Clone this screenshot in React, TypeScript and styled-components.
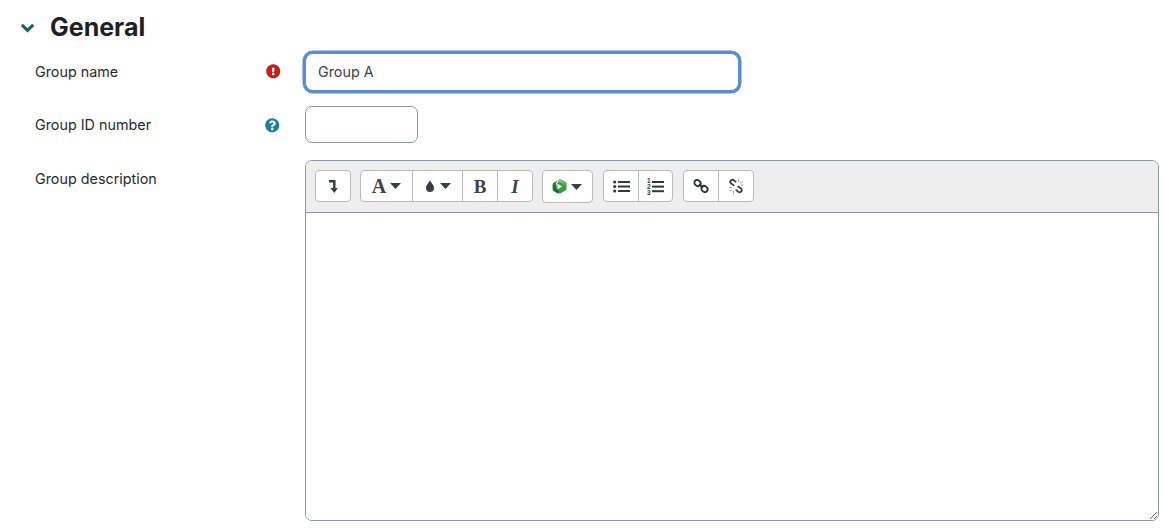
import React from "react";
import styled, { createGlobalStyle } from "styled-components";
import { FaExclamationCircle, FaQuestionCircle } from "react-icons/fa";

const Global = createGlobalStyle`
  html, body { margin: 0; padding: 0; background: #fff; overflow: hidden; }
  body { font-family: Inter, "Liberation Sans", sans-serif; color: #262a2e; font-size: 14.35px; }
  * { box-sizing: border-box; }
`;
const Page = styled.div`
  width: 1164px;
  height: 528px;
  padding: 12px 5px 0 20px;
  overflow: hidden;
`;
const Heading = styled.div`
  display: flex;
  align-items: center;
  height: 30px;
  margin-bottom: 9px;
`;
const ChevronIcon = styled.svg`
  flex: none;
  margin: 2px 15px 0 0;
`;
const Title = styled.h2`
  margin: 0;
  font-size: 25px;
  line-height: 30px;
  font-weight: 700;
  color: #1d2125;
`;
const Row = styled.div<{ $h: number }>`
  display: grid;
  grid-template-columns: 230px 40px 1fr;
  height: ${(p) => p.$h}px;
  padding-left: 15px;
`;
const Label = styled.label<{ $t: number }>`
  line-height: 22px;
  padding-top: ${(p) => p.$t}px;
`;
const Help = styled.div<{ $c: string; $t: number; $l: number }>`
  color: ${(p) => p.$c};
  padding-top: ${(p) => p.$t}px;
  padding-left: ${(p) => p.$l}px;
  line-height: 0;
  svg { width: 14.5px; height: 14.5px; }
`;
const NameInput = styled.input`
  display: block;
  width: 434px;
  height: 38px;
  margin-top: 2px;
  border: 1px solid #5b8bd3;
  border-radius: 8px;
  box-shadow: 0 0 0 2.5px #5b8bd3;
  outline: none;
  padding: 0 12px 2px;
  font: inherit;
  color: #3d4248;
`;
const IdInput = styled.input`
  display: block;
  width: 113px;
  height: 37px;
  border: 1px solid #8f959e;
  border-radius: 7px;
  outline: none;
  background: #fff;
`;
const Editor = styled.div`
  width: 854px;
  height: 361px;
  border: 1px solid #8f959e;
  border-radius: 7px;
  overflow: hidden;
  display: flex;
  flex-direction: column;
`;
const Toolbar = styled.div`
  height: 52px;
  flex: none;
  background: #eeeeee;
  border-bottom: 1px solid #8f959e;
  padding: 9px 0 0 9px;
  display: flex;
  align-items: flex-start;
  gap: 9px;
`;
const Group = styled.div<{ $ml?: number; $h?: number }>`
  display: flex;
  height: ${(p) => p.$h ?? 32}px;
  margin-left: ${(p) => p.$ml ?? 0}px;
  background: #fff;
  border: 1px solid #bbbbbb;
  border-radius: 4px;
  overflow: hidden;
`;
const Btn = styled.div<{ $w: number; $gap?: number; $pr?: number }>`
  width: ${(p) => p.$w}px;
  display: flex;
  align-items: center;
  justify-content: center;
  color: #3a3f44;
  gap: ${(p) => p.$gap ?? 3}px;
  padding-right: ${(p) => p.$pr ?? 0}px;
  & + & { border-left: 1px solid #bbbbbb; }
`;
const Glyph = styled.span<{ $i?: boolean; $s: number }>`
  font-family: "Liberation Serif", serif;
  font-weight: 700;
  font-style: ${(p) => (p.$i ? "italic" : "normal")};
  font-size: ${(p) => p.$s}px;
  line-height: 1;
  color: #3e4347;
`;
const Digit = styled.text`
  font-family: "Liberation Sans", sans-serif;
  font-size: 6.5px;
  font-weight: 700;
  fill: #33383c;
`;

const Chevron = () => (
  <ChevronIcon width="15" height="10" viewBox="0 0 15 10" fill="none">
    <path d="M1.800 1.800L7.500 7.300l5.700-5.500" stroke="#1a5d63" strokeWidth="3" />
  </ChevronIcon>
);
const Caret = () => (
  <svg width="11" height="6" viewBox="0 0 11 6">
    <path d="M0 0h11L5.500 6z" fill="#3a3f44" />
  </svg>
);
const Tint = () => (
  <svg width="10" height="12" viewBox="0 0 10 12">
    <path d="M5 0C5.600 2.500 9 4.800 9 7.700a4 4.200 0 0 1-8 0C1 4.800 4.400 2.500 5 0z" fill="#3a3f44" />
  </svg>
);
const Return = () => (
  <svg width="9" height="13" viewBox="0 0 9 13" fill="none">
    <path d="M0 1.300h5.300v8" stroke="#3a3f44" strokeWidth="2.500" />
    <path d="M1.500 8h7.400L5.300 13z" fill="#3a3f44" />
  </svg>
);
const Cube = () => (
  <svg width="15" height="15" viewBox="0 0 15 15">
    <defs>
      <linearGradient id="cubeTop" x1="0" y1="0" x2="1" y2="1">
        <stop offset="0" stopColor="#a8cf9a" />
        <stop offset="1" stopColor="#3f9a45" />
      </linearGradient>
      <linearGradient id="cubeLeft" x1="0" y1="0" x2="0" y2="1">
        <stop offset="0" stopColor="#2f8a3b" />
        <stop offset="1" stopColor="#155f27" />
      </linearGradient>
    </defs>
    <path d="M7 .6c.6-.3 1.200-.3 1.800 0l4.600 2.500c.7.4 1 1 1 1.700v5c0 .8-.4 1.400-1 1.800l-4.700 2.700c-.6.3-1.200.3-1.800 0L2 11.800" fill="#3c9a45" />
    <path d="M5 2l2-1.400c.6-.3 1.200-.3 1.800 0l4.600 2.500c.7.4 1 1 1 1.700v3l-4-2.500V4.500z" fill="url(#cubeTop)" />
    <path d="M5.500 1.600L1.600 3.800C.9 4.200.6 4.800.6 5.500v4.800c0 .7.3 1.300 1 1.700l4.700 2.700.6-3.200L4 10V4z" fill="url(#cubeLeft)" />
    <path d="M5.500 4.700l5 2.800-5 2.800z" fill="#fff" />
  </svg>
);
const Bullets = () => (
  <svg width="17" height="13" viewBox="0 0 17 13" fill="#33383c">
    <circle cx="1.700" cy="2" r="1.600" />
    <circle cx="1.700" cy="6.500" r="1.600" />
    <circle cx="1.700" cy="11" r="1.600" />
    <rect x="5" y="1" width="12" height="2" />
    <rect x="5" y="5.500" width="12" height="2" />
    <rect x="5" y="10" width="12" height="2" />
  </svg>
);
const Numbers = () => (
  <svg width="17" height="17" viewBox="0 0 17 17" fill="#33383c">
    <Digit x="0" y="5.200">1</Digit>
    <Digit x="0" y="11">2</Digit>
    <Digit x="0" y="16.800">3</Digit>
    <rect x="5" y="3" width="12" height="2" />
    <rect x="5" y="7.600" width="12" height="2" />
    <rect x="5" y="12.200" width="12" height="2" />
  </svg>
);
const Link = () => (
  <svg width="16" height="14" viewBox="0 0 16 14" fill="none" stroke="#2c3034" strokeWidth="1.800">
    <ellipse cx="4.500" cy="4" rx="3.300" ry="2.800" transform="rotate(40 4.500 4)" />
    <ellipse cx="11.500" cy="10" rx="3.300" ry="2.800" transform="rotate(40 11.500 10)" />
    <path d="M6 5.300l4 3.400" />
  </svg>
);
const Unlink = () => (
  <svg width="16" height="16" viewBox="0 0 16 16" fill="none">
    <path d="M8.200 4.200L6 2.300C4.200.9 1.200 2.600 2.500 4.800c.6 1 2.300 1.900 3.800 3" stroke="#33383c" strokeWidth="1.700" />
    <path d="M9.700 8.200c1.500 1 3.200 1.900 3.800 3 1.300 2.200-1.700 3.900-3.500 2.500l-2.300-2" stroke="#33383c" strokeWidth="1.700" />
    <path d="M10.500 1v3M12 5l3-1.500M12.500 7h3M1 9.500h3M1.500 13L4 11.500M5.500 12.500v3" stroke="#a3a3a3" strokeWidth="1" />
  </svg>
);
const Area = styled.textarea`
  flex: 1;
  display: block;
  width: 100%;
  border: none;
  outline: none;
  resize: vertical;
  background: #fff;
`;

export default function App() {
  return (
    <Page>
      <Global />
      <Heading>
        <Chevron />
        <Title>General</Title>
      </Heading>
      <Row $h={55}>
        <Label $t={10}>Group name</Label>
        <Help $c="#c31f1f" $t={13} $l={1}><FaExclamationCircle /></Help>
        <NameInput defaultValue="Group A" />
      </Row>
      <Row $h={54}>
        <Label $t={8}>Group ID number</Label>
        <Help $c="#1f7e9a" $t={12} $l={0}><FaQuestionCircle /></Help>
        <IdInput />
      </Row>
      <Row $h={370}>
        <Label $t={8}>Group description</Label>
        <div />
        <Editor>
          <Toolbar>
            <Group><Btn $w={34}><Return /></Btn></Group>
            <Group>
              <Btn $w={51} $gap={4}><Glyph $s={20}>A</Glyph><Caret /></Btn>
              <Btn $w={50} $gap={5}><Tint /><Caret /></Btn>
              <Btn $w={35}><Glyph $s={19}>B</Glyph></Btn>
              <Btn $w={35}><Glyph $s={19} $i>I</Glyph></Btn>
            </Group>
            <Group $h={33}><Btn $w={49} $gap={4} $pr={2}><Cube /><Caret /></Btn></Group>
            <Group $ml={1}>
              <Btn $w={34}><Bullets /></Btn>
              <Btn $w={34}><Numbers /></Btn>
            </Group>
            <Group $ml={1}>
              <Btn $w={34}><Link /></Btn>
              <Btn $w={35}><Unlink /></Btn>
            </Group>
          </Toolbar>
          <Area />
        </Editor>
      </Row>
    </Page>
  );
}
